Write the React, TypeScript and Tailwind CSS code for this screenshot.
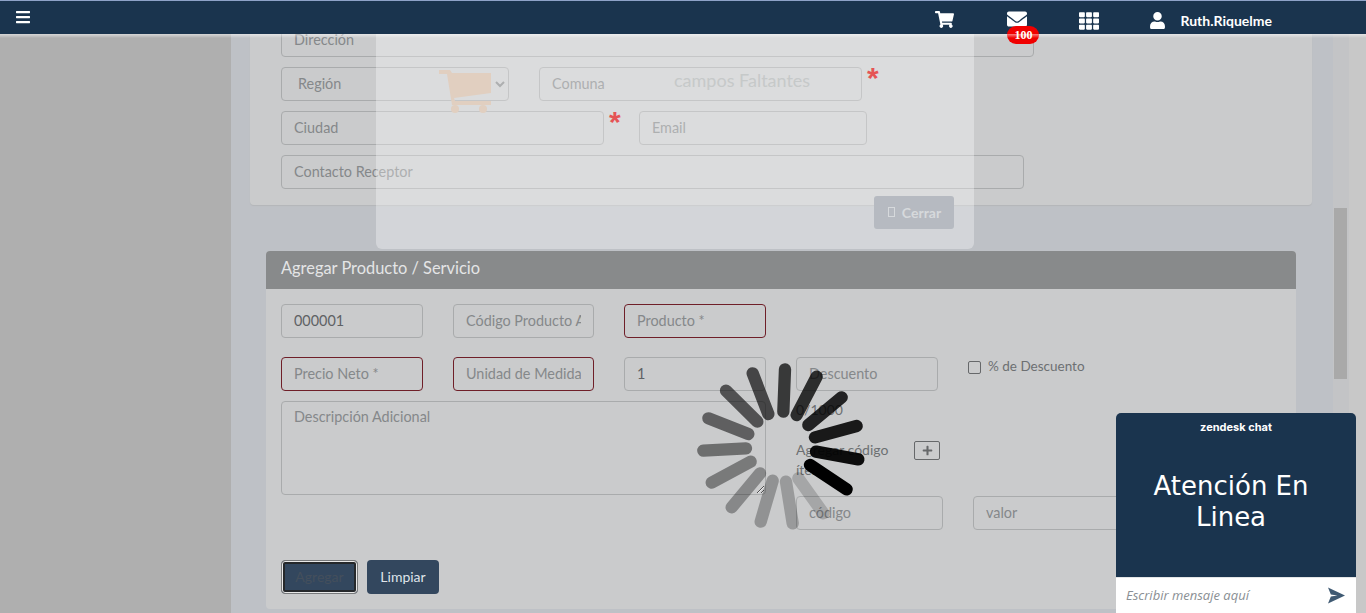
import { FaBars, FaEnvelope, FaPlus, FaShoppingCart, FaTh, FaUser } from 'react-icons/fa';

const SPOKES = [
  [310, 185, 315, 58, 0.72],
  [350, 195, 410, 80, 0.78],
  [385, 225, 485, 142, 0.83],
  [405, 262, 530, 228, 0.88],
  [408, 305, 535, 328, 0.94],
  [390, 345, 500, 418, 1],
  [355, 385, 430, 490, 0.18],
  [318, 395, 338, 520, 0.24],
  [278, 392, 242, 515, 0.28],
  [240, 370, 155, 472, 0.33],
  [212, 335, 95, 398, 0.4],
  [198, 295, 70, 302, 0.46],
  [205, 252, 85, 205, 0.53],
  [232, 215, 138, 122, 0.6],
  [265, 192, 218, 70, 0.66],
];

const FIELD =
  'h-[34px] rounded-[4px] border border-[#a9abac] bg-transparent px-3 pb-[2px] text-[14.4px] text-[#5f6264] outline-none placeholder:text-[#85888a]';
const REQUIRED =
  'h-[34px] rounded-[4px] border border-[#6f1f28] bg-transparent px-3 pb-[2px] text-[14.4px] text-[#5f6264] outline-none placeholder:text-[#85888a]';

function Star() {
  return <span className="mt-[-2px] ml-[5px] h-[26px] w-[13px] self-start font-['Liberation_Sans',sans-serif] text-[30px] leading-[26px] font-bold text-[#d80000]">*</span>;
}

function Header() {
  return (
    <header className="relative z-10 flex h-[34px] shrink-0 items-center border-t border-[#8ea2c8] bg-[#1a344e] pt-[6px] pr-[94px] pl-4 text-white">
      <FaBars className="mb-[7px] h-[16px] w-[14px]" />
      <FaShoppingCart className="mb-[3px] ml-auto h-[17px] w-[19px]" />
      <div className="relative ml-[53px]">
        <FaEnvelope className="mb-[3px] h-[20px] w-[20px]" />
        <span className="absolute top-[17px] left-0 flex h-[18px] w-[32px] items-center justify-center rounded-full bg-[#f00000] font-['Liberation_Serif',serif] text-[12px] font-bold">100</span>
      </div>
      <FaTh className="ml-[52px] h-[20px] w-[20px]" />
      <FaUser className="ml-[51px] h-[17px] w-[15px]" />
      <span className="ml-[15px] text-[14px] font-bold">Ruth.Riquelme</span>
    </header>
  );
}

function ClientPanel() {
  return (
    <section className="-mt-[11px] ml-[19px] flex w-[1062px] flex-col gap-[10px] rounded-b-[4px] bg-[#cacbcc] pb-4 pl-[31px] shadow-[0_1px_1px_#b4b6b9]">
      <input className={`${FIELD} w-[753px]`} placeholder="Dirección" />
      <div className="flex items-center">
        <select className={`${FIELD} w-[228px] text-[#85888a]`}>
          <option>Región</option>
        </select>
        <input className={`${FIELD} ml-[30px] w-[323px]`} placeholder="Comuna" />
        <Star />
      </div>
      <div className="flex items-center">
        <input className={`${FIELD} w-[323px]`} placeholder="Ciudad" />
        <Star />
        <input className={`${FIELD} ml-[17px] w-[228px]`} placeholder="Email" />
      </div>
      <input className={`${FIELD} w-[743px]`} placeholder="Contacto Receptor" />
    </section>
  );
}

function ProductPanel() {
  return (
    <section className="mt-[46px] ml-[35px] w-[1030px] rounded-[4px] bg-[#cacbcc]">
      <h2 className="flex h-[38px] items-center rounded-t-[4px] bg-[#888a8b] pb-[3px] pl-[15px] text-[16.4px] font-normal text-[#e4e5e6]">Agregar Producto / Servicio</h2>
      <div className="p-[15px]">
        <div className="flex gap-[30px]">
          <input className={`${FIELD} w-[142px]`} defaultValue="000001" />
          <input className={`${FIELD} w-[141px]`} placeholder="Código Producto Adicional" />
          <input className={`${REQUIRED} w-[142px]`} placeholder="Producto *" />
        </div>
        <div className="mt-[19px] flex gap-[30px]">
          <input className={`${REQUIRED} w-[142px]`} placeholder="Precio Neto *" />
          <input className={`${REQUIRED} w-[141px]`} placeholder="Unidad de Medida" />
          <input className={`${FIELD} w-[142px]`} defaultValue="1" />
          <input className={`${FIELD} w-[142px]`} placeholder="Descuento" />
          <label className="flex items-start gap-[7px] text-[13.5px] leading-[18px] text-[#6d7072]">
            <input type="checkbox" className="mt-[4px] h-[13px] w-[13px] appearance-none rounded-[2px] border border-[#66686a]" />
            % de Descuento
          </label>
        </div>
        <div className="mt-[10px] flex gap-[30px]">
          <textarea className={`${FIELD} h-[94px] w-[485px] pt-1`} placeholder="Descripción Adicional" />
          <div className="flex w-[144px] flex-col text-[14px] leading-[20px] text-[#6d7072]">
            <span className="mt-[-1px]">0/1000</span>
            <div className="mt-[20px] flex items-start">
              <span className="w-[118px]">Agregar código ítem</span>
              <button className="mt-[1px] flex h-[19px] w-[26px] items-center justify-center rounded-[2px] border border-[#66686a]">
                <FaPlus className="h-[11px] w-[11px] text-[#66686a]" />
              </button>
            </div>
          </div>
        </div>
        <div className="mt-px ml-[515px] flex gap-[30px]">
          <input className={`${FIELD} w-[147px]`} placeholder="código" />
          <input className={`${FIELD} w-[147px]`} placeholder="valor" />
        </div>
        <div className="mt-[30px] flex gap-[9px]">
          <button className="h-[34px] w-[77px] rounded-[4px] border border-[#77797b] bg-[#33475e] pb-[2px] text-[14px] text-[#444f5c] shadow-[inset_0_0_0_1px_#e8e8e8,inset_0_0_0_3px_#25282b]">Agregar</button>
          <button className="h-[34px] w-[72px] rounded-[4px] bg-[#33475e] pb-[2px] text-[14px] text-[#dfe4ea]">Limpiar</button>
        </div>
      </div>
    </section>
  );
}

function Modal() {
  return (
    <div className="absolute top-[34px] left-[376px] flex h-[215px] w-[598px] flex-col rounded-b-[6px] bg-white/[.33]">
      <div className="flex items-start">
        <svg viewBox="0 0 54 44" className="mt-[36px] ml-[63px] h-[44px] w-[54px] fill-[#e1cfc0]">
          <path d="M0 0h11l2 3h39v20L15 28l1 3h36v4H13L8 4H0z" />
          <circle cx="16" cy="39" r="4" />
          <circle cx="44" cy="39" r="4" />
        </svg>
        <h3 className="mt-[35px] ml-[181px] text-[18px] leading-[22px] font-normal text-[#c6c9c9]">campos Faltantes</h3>
      </div>
      <div className="mt-auto flex justify-end pr-[20px] pb-[20px]">
        <button className="flex h-[33px] w-[80px] items-center justify-center gap-[7px] rounded-[3px] bg-[#b6bac1] pb-px pl-px text-[14px] font-bold text-[#d6d9dc]">
          <span className="h-[10px] w-[7px] border border-[#d6d9dc]" />
          Cerrar
        </button>
      </div>
    </div>
  );
}

function ChatWidget() {
  return (
    <div className="absolute top-[413px] left-[1116px] flex h-[200px] w-[240px] flex-col overflow-hidden rounded-t-[5px] bg-[#1a344e]">
      <p className="mt-[7px] text-center font-['Inter',sans-serif] text-[11px] leading-[14px] font-bold text-white">zendesk chat</p>
      <p className="mt-[37px] pr-[24px] pl-[14px] text-center font-['DejaVu_Sans',sans-serif] text-[26px] leading-[31px] text-white">Atención En Linea</p>
      <div className="mt-auto flex h-[36px] items-center justify-between border-t border-[#e3e5e6] bg-white pr-[11px] pl-[10px]">
        <span className="font-['Open_Sans',sans-serif] text-[13px] text-[#8a8f94] italic">Escribir mensaje aquí</span>
        <svg viewBox="0 0 18 17" className="h-[17px] w-[17px] fill-[#3f5a73]">
          <path d="M0 0l18 8.5L0 17l3-7.5 7-1-7-1z" />
        </svg>
      </div>
    </div>
  );
}

function Spinner() {
  return (
    <svg viewBox="0 0 840 570" className="absolute top-[350px] left-[680px] h-[190px] w-[280px]">
      {SPOKES.map(([x1, y1, x2, y2, opacity]) => (
        <line key={`${x1}-${y1}`} x1={x1} y1={y1} x2={x2} y2={y2} stroke="#000" strokeOpacity={opacity} strokeWidth={37} strokeLinecap="round" />
      ))}
    </svg>
  );
}

export default function App() {
  return (
    <div className="relative flex h-[613px] w-[1366px] flex-col overflow-hidden bg-[#bec1c6] font-['Lato',sans-serif]">
      <Header />
      <div className="flex min-h-0 flex-1">
        <aside className="w-[231px] shrink-0 bg-[#afafaf]" />
        <main className="w-[1102px] shrink-0">
          <ClientPanel />
          <ProductPanel />
        </main>
        <div className="w-[16px] shrink-0 bg-[#c3c4c6] pt-[174px] pl-px">
          <div className="h-[171px] w-[13px] bg-[#a9a9a9]" />
        </div>
        <div className="flex-1 bg-[#c8c8c8]" />
      </div>
      <div className="absolute top-[34px] left-0 z-10 h-[4px] w-full bg-gradient-to-b from-white/50 to-transparent" />
      <Modal />
      <Spinner />
      <ChatWidget />
    </div>
  );
}
